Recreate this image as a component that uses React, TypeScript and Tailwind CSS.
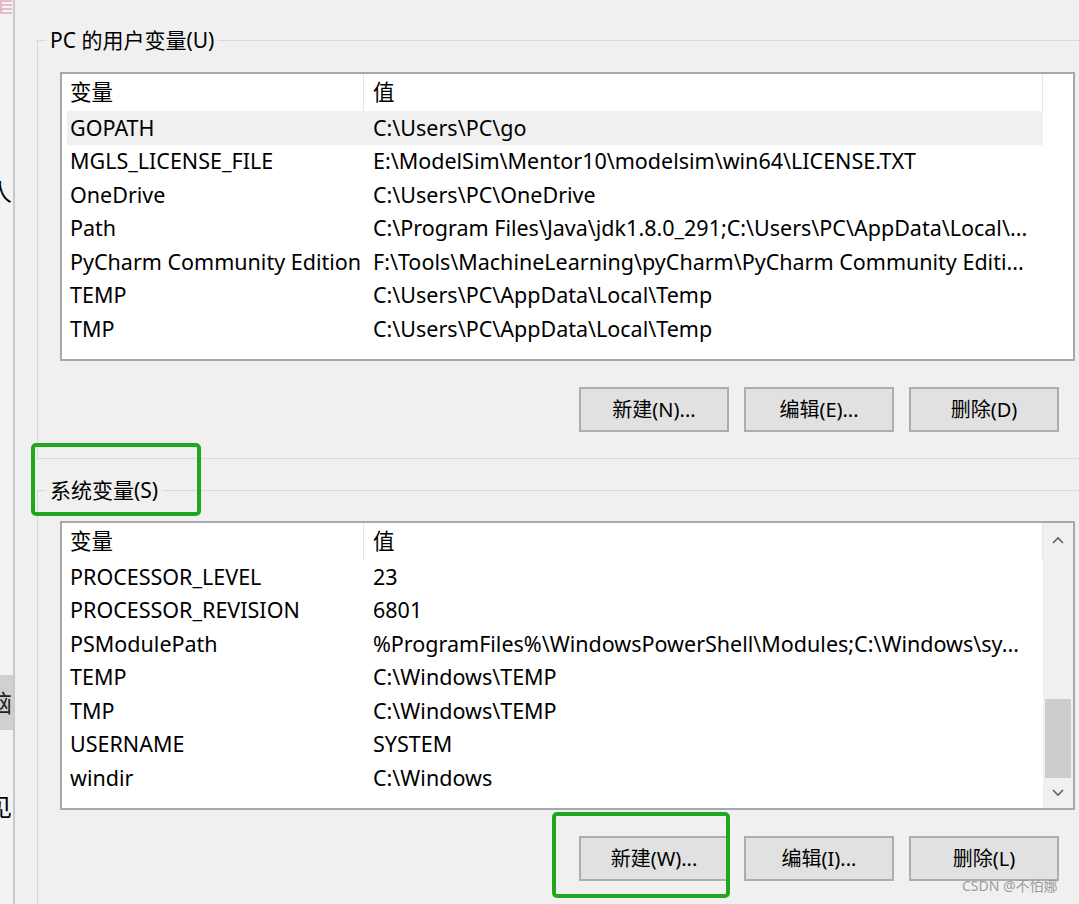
import React from "react";

type Row = { n: string; v: string; sel?: boolean };

const userRows: Row[] = [
  { n: "GOPATH", v: "C:\\Users\\PC\\go", sel: true },
  { n: "MGLS_LICENSE_FILE", v: "E:\\ModelSim\\Mentor10\\modelsim\\win64\\LICENSE.TXT" },
  { n: "OneDrive", v: "C:\\Users\\PC\\OneDrive" },
  { n: "Path", v: "C:\\Program Files\\Java\\jdk1.8.0_291;C:\\Users\\PC\\AppData\\Local\\..." },
  { n: "PyCharm Community Edition", v: "F:\\Tools\\MachineLearning\\pyCharm\\PyCharm Community Editi..." },
  { n: "TEMP", v: "C:\\Users\\PC\\AppData\\Local\\Temp" },
  { n: "TMP", v: "C:\\Users\\PC\\AppData\\Local\\Temp" },
];

const sysRows: Row[] = [
  { n: "PROCESSOR_LEVEL", v: "23" },
  { n: "PROCESSOR_REVISION", v: "6801" },
  { n: "PSModulePath", v: "%ProgramFiles%\\WindowsPowerShell\\Modules;C:\\Windows\\sy..." },
  { n: "TEMP", v: "C:\\Windows\\TEMP" },
  { n: "TMP", v: "C:\\Windows\\TEMP" },
  { n: "USERNAME", v: "SYSTEM" },
  { n: "windir", v: "C:\\Windows" },
];

function Chevron({ up }: { up?: boolean }) {
  return (
    <svg width="12" height="8" viewBox="0 0 12 8">
      <polyline
        points={up ? "1,7 6,2 11,7" : "1,1 6,6 11,1"}
        fill="none"
        stroke="#606060"
        strokeWidth="1.6"
      />
    </svg>
  );
}

function VarList({ rows, scroll, top }: { rows: Row[]; scroll?: boolean; top: string }) {
  return (
    <div className={`${top} ml-[22px] w-[1015px] h-[289px] border-2 border-[#a5a9af] bg-white flex`}>
      <div className="flex-1 min-w-0 flex flex-col">
        <div className="h-[37px] shrink-0 flex items-center border-r border-[#e5e5e5]">
          <div className="w-[302px] h-full flex items-center pl-[8px] border-r border-[#e5e5e5]">变量</div>
          <div className="pl-[9px]">值</div>
        </div>
        {rows.map((r, i) => (
          <div
            key={i}
            className={`ml-[5px] h-[33.5px] shrink-0 flex items-center ${r.sel ? "bg-[#f0f0f0]" : ""}`}
          >
            <div className="w-[297px] shrink-0 pl-[3px] whitespace-nowrap overflow-hidden">{r.n}</div>
            <div className="pl-[9px] whitespace-nowrap overflow-hidden">{r.v}</div>
          </div>
        ))}
      </div>
      <div className={`w-[30px] shrink-0 flex flex-col ${scroll ? "bg-[#f0f0f0]" : "bg-white"}`}>
        {scroll && (
          <>
            <div className="h-[34px] flex items-center justify-center">
              <Chevron up />
            </div>
            <div className="flex-1 flex flex-col justify-end">
              <div className="mx-[2px] h-[79px] bg-[#cdcdcd]" />
            </div>
            <div className="h-[30px] flex items-center justify-center">
              <Chevron />
            </div>
          </>
        )}
      </div>
    </div>
  );
}

function Btn({ label }: { label: string }) {
  return (
    <div className="w-[150px] h-[45px] bg-[#e1e1e1] border-2 border-[#adadad] flex items-center justify-center text-[20px]">
      {label}
    </div>
  );
}

function Buttons({ labels }: { labels: string[] }) {
  return (
    <div className="mt-[26px] flex gap-[15px] ml-[541px]">
      {labels.map((l) => (
        <Btn key={l} label={l} />
      ))}
    </div>
  );
}

export default function App() {
  return (
    <div className="w-[1079px] h-[904px] overflow-hidden relative bg-[#f0f0f0] flex text-[21.5px] text-black [font-family:'Noto_Sans','Noto_Sans_CJK_SC',sans-serif]">
      {/* left neighbour panel, cut off */}
      <div className="w-[15px] shrink-0 bg-[#f3f3f3] border-r-2 border-[#c8c8c8] flex flex-col overflow-hidden">
        <div className="h-[15px] shrink-0 flex items-start">
          <svg width="12" height="15" viewBox="0 0 12 15">
            <rect x="1" y="1" width="14" height="12" fill="none" stroke="#e3a2b6" strokeWidth="1.4" />
            <line x1="1" y1="5" x2="12" y2="5" stroke="#e3a2b6" strokeWidth="1.4" />
            <line x1="1" y1="9" x2="12" y2="9" stroke="#e3a2b6" strokeWidth="1.4" />
          </svg>
        </div>
        <div className="mt-[163px] h-[28px] shrink-0 overflow-hidden whitespace-nowrap text-[24px] leading-[28px]">
          <span className="-ml-[12px]">人</span>
        </div>
        <div className="mt-[469px] h-[55px] shrink-0 bg-[#d0d0d0] overflow-hidden whitespace-nowrap flex items-center text-[24px] text-[#222]">
          <span className="-ml-[12px]">脑</span>
        </div>
        <div className="mt-[60px] h-[34px] shrink-0 overflow-hidden whitespace-nowrap text-[24px] leading-[34px]">
          <span className="-ml-[12px]">见</span>
        </div>
      </div>

      {/* main */}
      <div className="flex-1 min-w-0 pl-[22px]">
        <fieldset className="mt-[29px] border-l border-t border-b border-[#d9d9d9] pb-[26px]">
          <legend className="ml-[8px] px-[4px] text-[21px] leading-[22px]">PC 的用户变量(U)</legend>
          <VarList rows={userRows} top="mt-[21px]" />
          <Buttons labels={["新建(N)...", "编辑(E)...", "删除(D)"]} />
        </fieldset>

        <fieldset className="mt-[20px] border-l border-t border-[#d9d9d9] h-[500px]">
          <legend className="ml-[8px] px-[4px] text-[21px] leading-[22px]">系统变量(S)</legend>
          <VarList rows={sysRows} scroll top="mt-[20px]" />
          <Buttons labels={["新建(W)...", "编辑(I)...", "删除(L)"]} />
        </fieldset>
      </div>

      {/* annotations */}
      <div className="absolute left-[31px] top-[443px] w-[170px] h-[73px] border-4 border-[#1fa81f] rounded-[5px]" />
      <div className="absolute left-[552px] top-[812px] w-[178px] h-[86px] border-4 border-[#1fa81f] rounded-[5px]" />
      <div className="absolute left-[962px] top-[876px] text-[14px] leading-[20px] text-[#9c9c9c]">CSDN @不怕娜</div>
    </div>
  );
}
